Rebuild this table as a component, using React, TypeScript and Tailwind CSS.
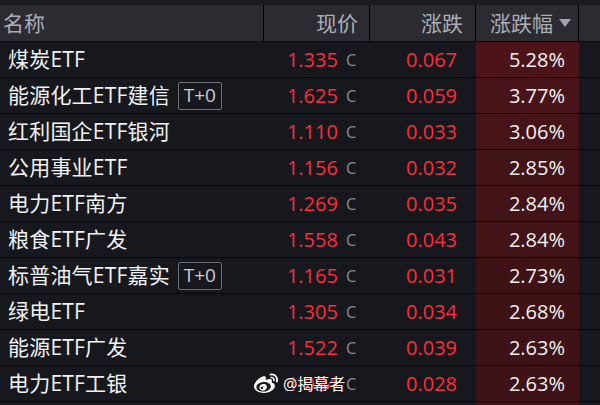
import { FaWeibo } from "react-icons/fa";

const rows = [
  { name: "煤炭ETF", price: "1.335", chg: "0.067", pct: "5.28%", t0: false, bg: "bg-[#4c1419]" },
  { name: "能源化工ETF建信", price: "1.625", chg: "0.059", pct: "3.77%", t0: true, bg: "bg-[#491419]" },
  { name: "红利国企ETF银河", price: "1.110", chg: "0.033", pct: "3.06%", t0: false, bg: "bg-[#461318]" },
  { name: "公用事业ETF", price: "1.156", chg: "0.032", pct: "2.85%", t0: false, bg: "bg-[#421317]" },
  { name: "电力ETF南方", price: "1.269", chg: "0.035", pct: "2.84%", t0: false, bg: "bg-[#421317]" },
  { name: "粮食ETF广发", price: "1.558", chg: "0.043", pct: "2.84%", t0: false, bg: "bg-[#421317]" },
  { name: "标普油气ETF嘉实", price: "1.165", chg: "0.031", pct: "2.73%", t0: true, bg: "bg-[#3f1216]" },
  { name: "绿电ETF", price: "1.305", chg: "0.034", pct: "2.68%", t0: false, bg: "bg-[#3f1216]" },
  { name: "能源ETF广发", price: "1.522", chg: "0.039", pct: "2.63%", t0: false, bg: "bg-[#3e1216]" },
  { name: "电力ETF工银", price: "1.094", chg: "0.028", pct: "2.63%", t0: false, bg: "bg-[#3e1216]" },
];

const cols = "grid grid-cols-[264px_106px_106px_103px_21px]";

export default function App() {
  return (
    <div
      className="relative w-[600px] h-[405px] overflow-hidden bg-[#1b1b1f] pt-[5px]"
      style={{ fontFamily: '"Open Sans", "Noto Sans CJK SC", sans-serif' }}
    >
      {/* header */}
      <div className={`${cols} h-[36px] bg-[#2b2b31] text-[21px] text-[#a9adb5] leading-none`}>
        <div className="flex items-center pl-[3px] border-r border-black">名称</div>
        <div className="flex items-center justify-end pr-[11px] border-r border-black">现价</div>
        <div className="flex items-center justify-end pr-[12px] border-r border-black">涨跌</div>
        <div className="flex items-center pl-[14px] gap-[6px] border-r border-black">
          <span>涨跌幅</span>
          <span className="w-0 h-0 border-l-[6px] border-r-[6px] border-t-[8px] border-l-transparent border-r-transparent border-t-[#a0a3aa]" />
        </div>
        <div />
      </div>

      {/* rows */}
      {[...rows, { name: "", price: "", chg: "", pct: "", t0: false, bg: "bg-[#3e1216]" }].map((r, i) => (
        <div key={i} className={`${cols} h-[36px] border-t border-[#08090b] bg-[#16181d] leading-none`}>
          <div className="flex items-center pl-[8px] gap-[8px] text-[21px] text-[#f2f2f2]">
            <span className="tracking-[0.2px]">{r.name}</span>
            {r.t0 && (
              <span className="flex items-center justify-center w-[44px] h-[28px] border border-[#6b6e75] rounded-[2px] text-[19px] text-[#c9ccd2]">
                T+0
              </span>
            )}
          </div>
          <div className="flex items-center justify-end pr-[14px] gap-[8px]">
            {r.price && (
              <>
                <span className="text-[20px] text-[#ff2b3a]">{r.price}</span>
                <span className="text-[16px] text-[#8a8d94]">C</span>
              </>
            )}
          </div>
          <div className="flex items-center justify-end pr-[19px] text-[20px] text-[#ff2b3a]">{r.chg}</div>
          <div className={`flex items-center justify-end pr-[14px] text-[20px] text-[#f2f2f2] ${r.bg}`}>{r.pct}</div>
          <div />
        </div>
      ))}

      {/* watermark */}
      <div className="absolute left-[254px] top-[372px] flex items-center gap-[5px] text-white">
        <FaWeibo size={24} />
        <span className="text-[16px] leading-none [text-shadow:0_0_2px_rgba(0,0,0,0.6)]">@揭幕者</span>
      </div>
    </div>
  );
}
